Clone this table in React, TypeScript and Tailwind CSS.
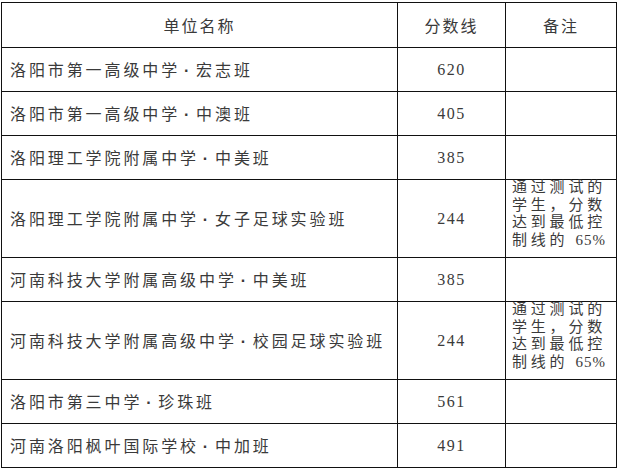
const rows: { school: string; cls: string; score: string; note?: boolean }[] = [
  { school: "洛阳市第一高级中学", cls: "宏志班", score: "620" },
  { school: "洛阳市第一高级中学", cls: "中澳班", score: "405" },
  { school: "洛阳理工学院附属中学", cls: "中美班", score: "385" },
  { school: "洛阳理工学院附属中学", cls: "女子足球实验班", score: "244", note: true },
  { school: "河南科技大学附属高级中学", cls: "中美班", score: "385" },
  { school: "河南科技大学附属高级中学", cls: "校园足球实验班", score: "244", note: true },
  { school: "洛阳市第三中学", cls: "珍珠班", score: "561" },
  { school: "河南洛阳枫叶国际学校", cls: "中加班", score: "491" },
];

const cjk = "font-['Noto_Sans_CJK_SC',sans-serif]";
const serif = "font-['Liberation_Serif','Noto_Sans_CJK_SC',serif]";

function Note() {
  return (
    <div className={`${cjk} text-[15px] leading-[17.5px] tracking-[3.8px] text-[#3a3a3a] pl-[6px] -mt-[3px]`}>
      <div>通过测试的</div>
      <div>学生，分数</div>
      <div>达到最低控</div>
      <div>
        制线的 <span className={`${serif} tracking-[1px]`}>65%</span>
      </div>
    </div>
  );
}

export default function App() {
  const head = `border border-[#111] ${cjk} font-normal text-[16px] tracking-[2px] text-[#3a3a3a] text-center align-middle`;
  return (
    <div className="w-[619px] h-[470px] bg-white pt-[2px] pl-[1px]">
      <table className="w-[616px] border-collapse table-fixed">
        <colgroup>
          <col className="w-[396px]" />
          <col className="w-[108px]" />
          <col className="w-[111px]" />
        </colgroup>
        <thead>
          <tr className="h-[45px]">
            <th className={head}>单位名称</th>
            <th className={head}>分数线</th>
            <th className={head}>备注</th>
          </tr>
        </thead>
        <tbody>
          {rows.map((r, i) => (
            <tr key={i} className={r.note ? "h-[78px]" : "h-[44px]"}>
              <td className={`border border-[#111] ${cjk} text-[16px] tracking-[2.9px] text-[#3a3a3a] pl-[8px] align-middle whitespace-nowrap`}>
                {r.school}
                <span className="inline-block w-[16px] pr-[3px] text-center tracking-normal font-['Liberation_Sans',sans-serif] font-bold">·</span>
                {r.cls}
              </td>
              <td className={`border border-[#111] ${serif} text-[16px] tracking-[1.5px] text-[#3a3a3a] text-center align-middle`}>
                {r.score}
              </td>
              <td className={`border border-[#111] ${r.note ? "align-top" : "align-middle"}`}>
                {r.note ? <Note /> : null}
              </td>
            </tr>
          ))}
        </tbody>
      </table>
    </div>
  );
}
